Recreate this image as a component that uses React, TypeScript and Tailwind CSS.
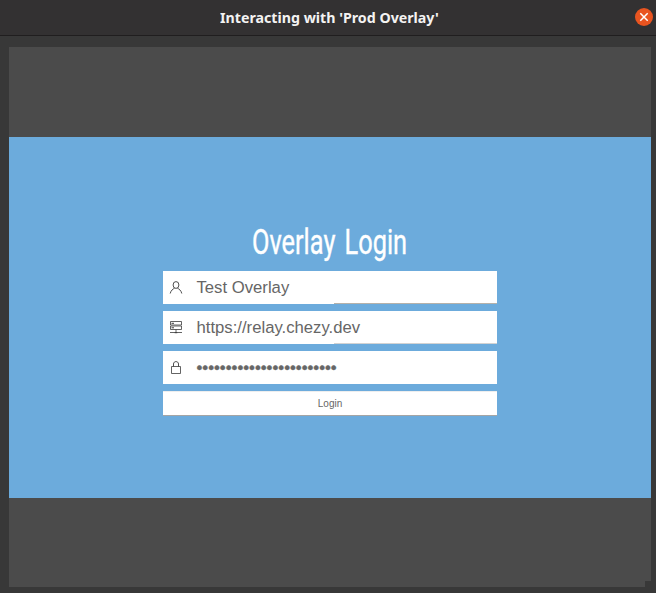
import type { ReactNode } from 'react';

const iconProps = {
  width: 14,
  height: 14,
  viewBox: '0 0 14 14',
  fill: 'none',
  stroke: '#3c3c3c',
  strokeWidth: 0.9,
};

function UserIcon() {
  return (
    <svg {...iconProps}>
      <ellipse cx="7" cy="5" rx="2.900" ry="3.400" />
      <path d="M1.200 13.500C1.800 10.600 4 8.800 5.500 8.300M8.500 8.300c1.500 .5 3.700 2.300 4.300 5.200" />
    </svg>
  );
}

function ServerIcon() {
  return (
    <svg {...iconProps}>
      <path d="M1.500 1.500h11v3.500h-11zM1.500 6h11v3.500h-11zM7 9.500v2.500M1 12.500h12" strokeWidth="0.800" />
      <path d="M2.500 3.300h2.500M2.500 7.800h2.500M5.700 12.700h2.600" strokeWidth="1" />
    </svg>
  );
}

function LockIcon() {
  return (
    <svg {...iconProps}>
      <path d="M2.500 6.500h9v7h-9z" strokeWidth="0.800" />
      <path d="M4.500 6.500V4C4.500 0.800 9.500 0.800 9.500 4v2.500" />
    </svg>
  );
}

function Field({ icon, shade, children }: { icon: ReactNode; shade?: string; children: ReactNode }) {
  return (
    <div className="flex h-[33px] flex-col bg-white">
      <div className="flex h-8 items-start pl-1.5">
        <span className="mt-[9px]">{icon}</span>
        <span className="ml-[13.5px] pt-px text-[16.7px] leading-8 whitespace-pre text-[#666]">{children}</span>
      </div>
      <div className={`ml-[171px] h-px shrink-0 ${shade ?? ''}`} />
    </div>
  );
}

export default function App() {
  return (
    <div className="flex h-[593px] w-[656px] flex-col overflow-hidden bg-[#383838] font-['Liberation_Sans',Arial,sans-serif]">
      <header className="flex h-9 shrink-0 border-b border-[#201e1f] bg-[#333132]">
        <div className="w-[220px] shrink-0" />
        <h1 className="w-[415px] origin-left scale-x-[0.98] font-['Noto_Sans',sans-serif] text-[14.5px] leading-[35px] font-bold whitespace-nowrap text-[#f4f3f2]">
          Interacting with 'Prod Overlay'
        </h1>
        <button className="mt-[8px] h-[18px] w-[18px] shrink-0 rounded-full bg-[#e95420]" aria-label="Close">
          <svg width="18" height="18" viewBox="0 0 18 18" stroke="#fff" strokeWidth="1.500">
            <path d="M5.300 5.300l7.400 7.400M12.700 5.300l-7.400 7.400" />
          </svg>
        </button>
      </header>
      <main className="mt-[11px] ml-[9px] flex h-[540px] w-[642px] flex-col bg-[#4b4b4b]">
        <div className="h-[90px] shrink-0" />
        <section className="flex h-[361px] shrink-0 flex-col items-center bg-[#6cabdc] pt-[80px]">
          <h2 className="h-[54px] origin-center scale-x-[0.715] font-['Roboto',sans-serif] text-[35.5px] leading-[51px] [word-spacing:4px] whitespace-nowrap text-white [-webkit-text-stroke:0.4px_#fff]">
            Overlay Login
          </h2>
          <form className="flex w-[334px] flex-col gap-[7px]">
            <Field icon={<UserIcon />} shade="bg-[#b5b1aa]">Test Overlay</Field>
            <Field icon={<ServerIcon />} shade="bg-[#d2d2d2]">https://relay.chezy.dev</Field>
            <Field icon={<LockIcon />}>
              <span className="[-webkit-text-stroke:0.4px_#666]">{'•'.repeat(24)}</span>
            </Field>
            <button
              type="button"
              className="h-[25px] border-t border-b border-t-[#eee] border-b-[#a5a5a5] bg-white pt-px text-center text-[10px] leading-[22px] text-[#666]"
            >
              Login
            </button>
          </form>
        </section>
        <div className="flex grow items-end justify-end">
          <div className="size-1.5 bg-[#383838]" />
        </div>
      </main>
    </div>
  );
}
